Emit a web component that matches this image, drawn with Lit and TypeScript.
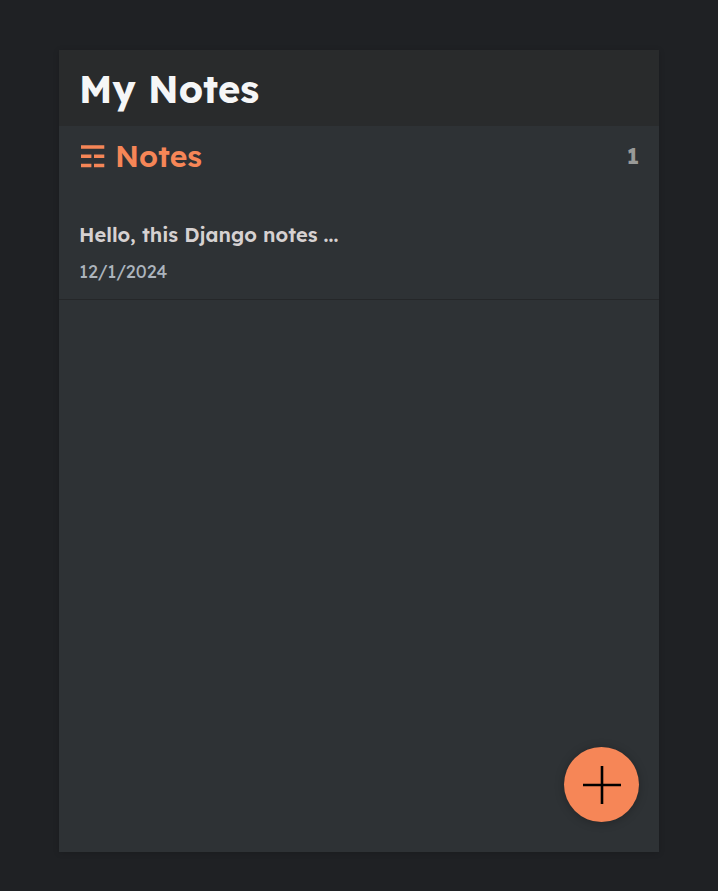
import { LitElement, html, css } from "lit";
import { customElement, state } from "lit/decorators.js";

interface Note {
  id: number;
  title: string;
  date: string;
}

@customElement("app-root")
export class AppRoot extends LitElement {
  static styles = css`
    :host {
      display: flex;
      justify-content: center;
      box-sizing: border-box;
      min-height: 100vh;
      padding: 50px 59px 39px;
      background: #1f2124;
      font-family: Lexend, Inter, "Noto Sans", sans-serif;
      color: #d6d1d1;
    }
    .app {
      display: flex;
      flex-direction: column;
      position: relative;
      width: 100%;
      max-width: 600px;
      background: #2e3235;
      box-shadow: 0 1px 6px rgba(0, 0, 0, 0.16);
    }
    .app-header {
      display: flex;
      align-items: center;
      padding: 14px 20px 12px;
      background: #292b2c;
    }
    h1,
    h2,
    h3,
    p {
      margin: 0;
    }
    h1 {
      font-size: 38px;
      line-height: 50px;
      font-weight: 700;
      color: #f5f6f7;
    }
    .notes-header {
      display: flex;
      align-items: center;
      justify-content: space-between;
      padding: 10px 20px;
    }
    h2 {
      display: flex;
      align-items: center;
      gap: 10px;
      font-size: 30px;
      line-height: 40px;
      font-weight: 600;
      color: #f68657;
    }
    .list-icon {
      width: 26px;
      height: 24px;
      fill: currentColor;
    }
    .count {
      font-size: 22px;
      line-height: 30px;
      font-weight: 700;
      color: #999a98;
    }
    .notes-list {
      list-style: none;
      margin: 16px 0 0;
      padding: 0;
    }
    .note {
      display: flex;
      flex-direction: column;
      gap: 12px;
      padding: 20px 20px 15px;
      border-bottom: 1px solid #252729;
      color: inherit;
      text-decoration: none;
    }
    h3 {
      font-size: 20px;
      line-height: 26px;
      font-weight: 600;
    }
    .date {
      font-size: 18px;
      line-height: 24px;
      font-weight: 400;
      color: #acb4bd;
    }
    .add {
      display: flex;
      align-items: center;
      justify-content: center;
      position: absolute;
      right: 20px;
      bottom: 30px;
      width: 75px;
      height: 75px;
      padding: 0;
      border: 0;
      border-radius: 50%;
      background: #f68657;
      box-shadow: 0 1px 10px rgba(0, 0, 0, 0.25);
      cursor: pointer;
    }
    .plus {
      width: 39px;
      height: 39px;
      fill: #000;
    }
  `;

  @state() private notes: Note[] = [
    { id: 1, title: "Hello, this Django notes ...", date: "12/1/2024" },
  ];

  render() {
    return html`
      <main class="app">
        <header class="app-header"><h1>My Notes</h1></header>
        <div class="notes-header">
          <h2>
            <svg class="list-icon" viewBox="0 0 26 24" aria-hidden="true">
              <path
                d="M2 1.2h23.3v3.5H2zM2 10.4h10.4v3.5H2zM15 10.4h10.3v3.5H15zM2 19.8h10.4v3.5H2zM15 19.8h10.3v3.5H15z"
              />
            </svg>
            <span>Notes</span>
          </h2>
          <p class="count">${this.notes.length}</p>
        </div>
        <ul class="notes-list">
          ${this.notes.map(
            (note) => html`
              <li>
                <a class="note" href="#/note/${note.id}">
                  <h3>${note.title}</h3>
                  <p class="date">${note.date}</p>
                </a>
              </li>
            `
          )}
        </ul>
        <button class="add" type="button" aria-label="Add note">
          <svg class="plus" viewBox="0 0 39 39" aria-hidden="true">
            <path d="M18.7 1h2.6v17.7H39v2.6H21.300V39h-2.6V21.300H1v-2.6h17.700z" />
          </svg>
        </button>
      </main>
    `;
  }
}
